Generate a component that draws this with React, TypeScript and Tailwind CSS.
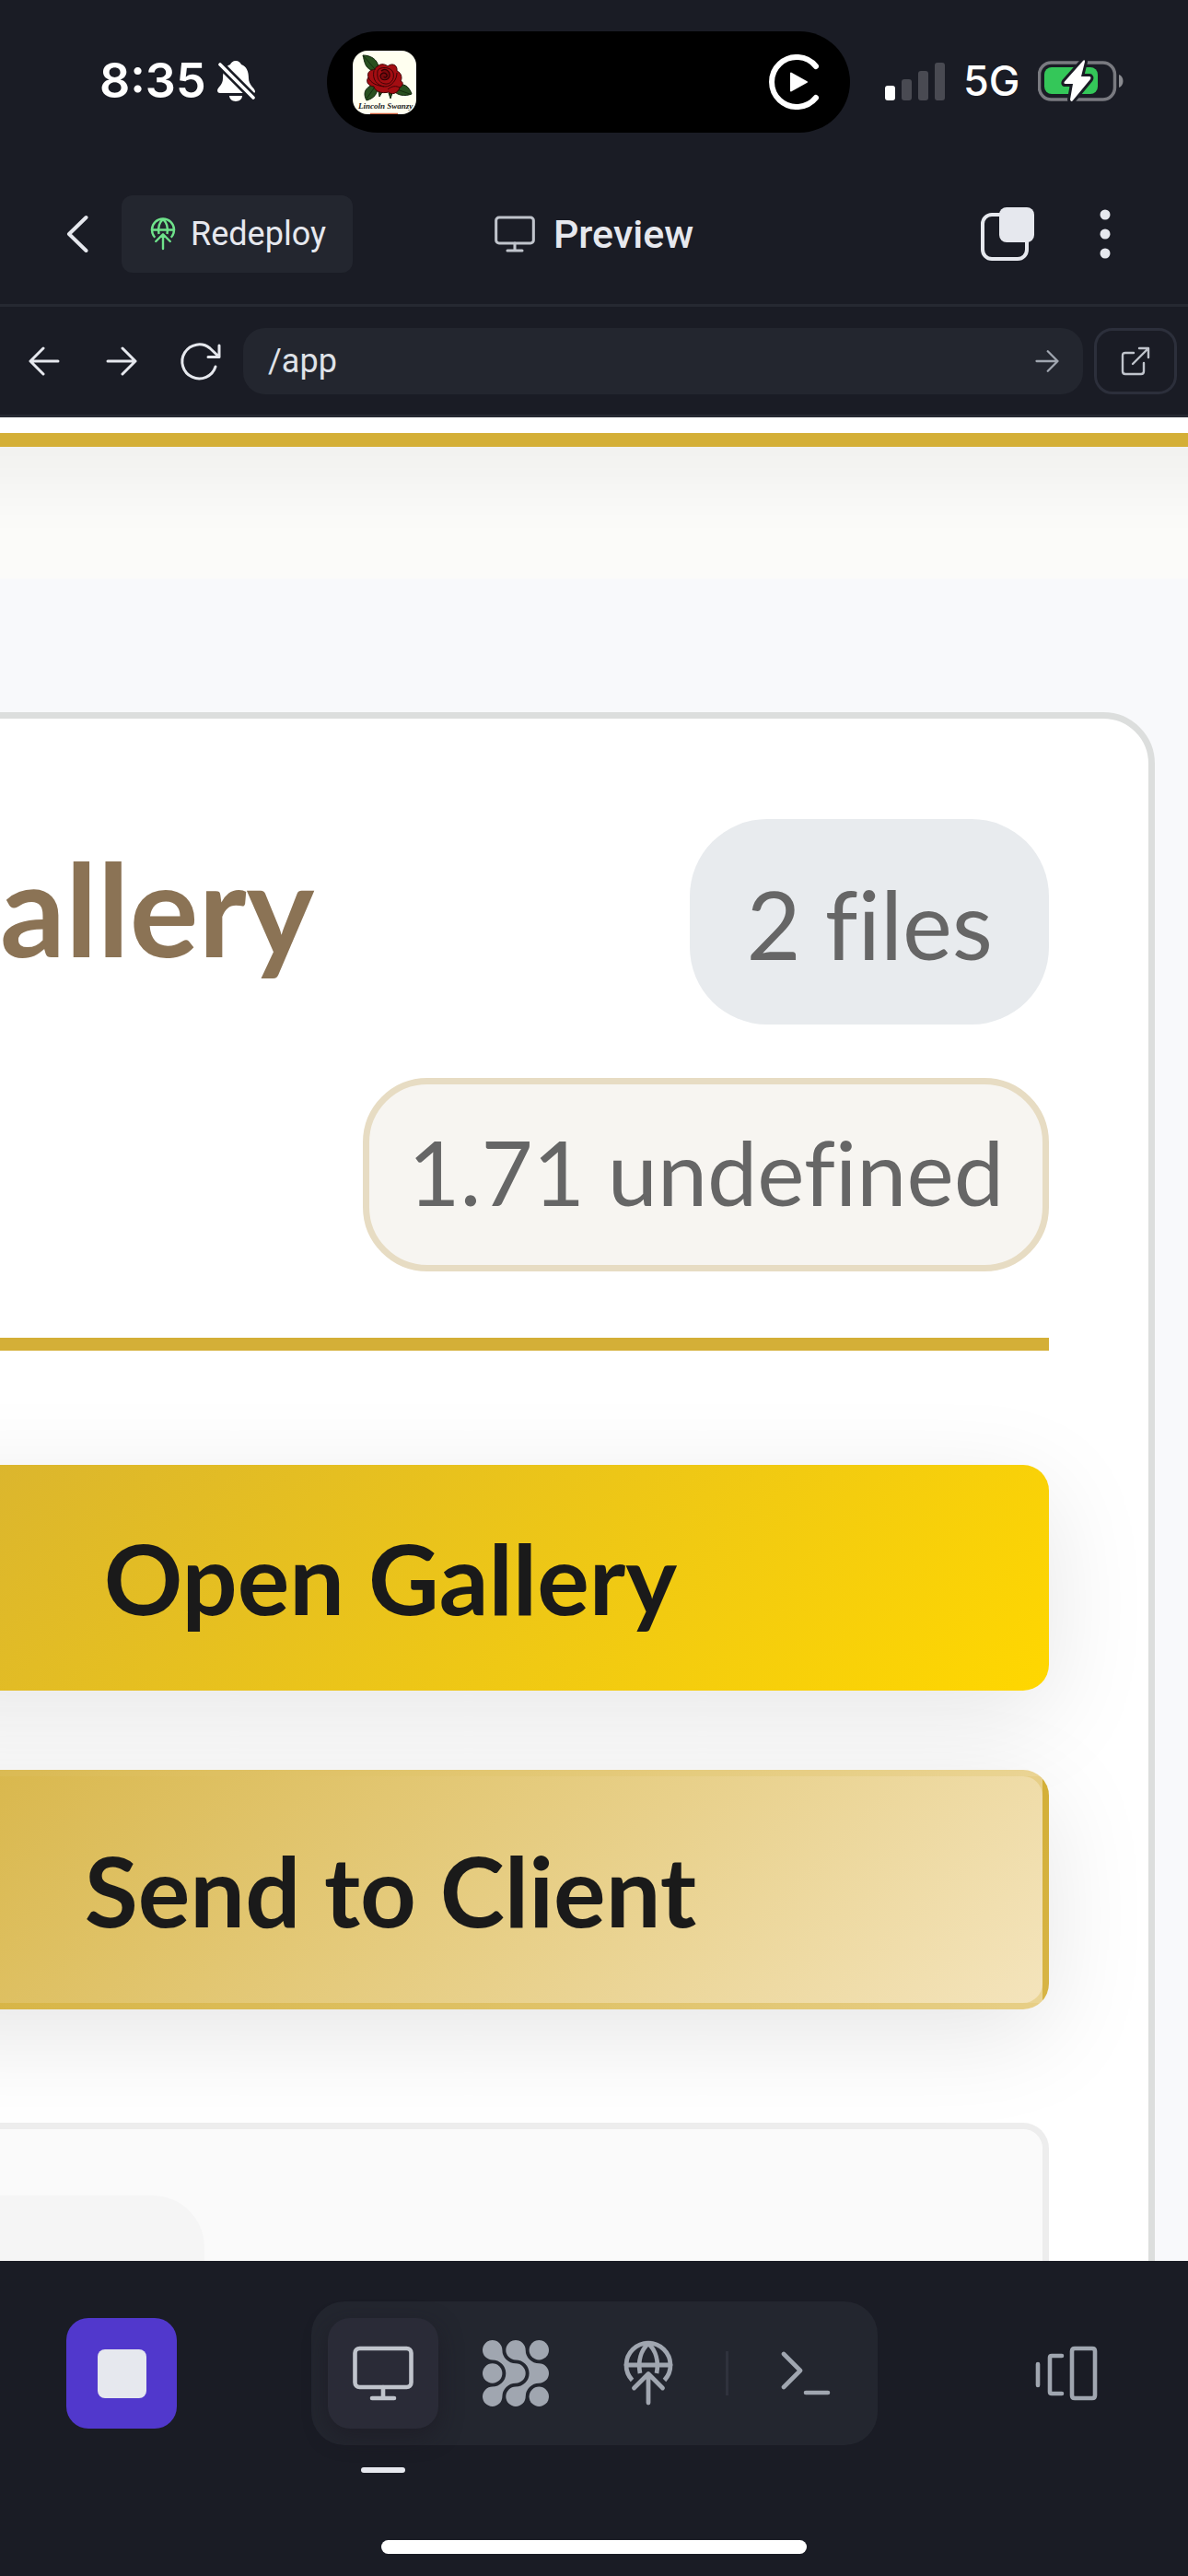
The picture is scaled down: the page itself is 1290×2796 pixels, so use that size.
import React from "react";

type IconProps = { className?: string };

const stroke = {
  fill: "none",
  stroke: "currentColor",
  strokeLinecap: "round" as const,
  strokeLinejoin: "round" as const,
};

function BellOff() {
  return (
    <svg viewBox="0 0 42 44" className="h-11 w-[42px]" aria-hidden="true">
      <path
        fill="#fff"
        d="M20 0C23 0 25 2 26 4C32 6 34 12 34 19C34 26 40 29 41 33C41 35 40 35 38 35H3C1 35 0 34 0 32C1 28 6 26 6 19C6 12 8 6 14 4C15 2 17 0 20 0Z"
      />
      <path fill="#fff" d="M13 38H27C27 41 24 44 20 44S13 41 13 38Z" />
      <path d="M1 2L42 43" stroke="#1a1c25" strokeWidth="9" />
      <path d="M3 4L39 40" stroke="#fff" strokeWidth="3.6" strokeLinecap="round" />
    </svg>
  );
}

function RoseLogo() {
  return (
    <svg viewBox="0 0 69 69" className="size-[69px] rounded-2xl" role="img" aria-label="Rose">
      <rect width="69" height="69" fill="#fffff0" />
      <g fill="#28501f" stroke="#10240d" strokeWidth="1">
        <path d="M11 5C19 5 27 9 28 18C28 22 24 23 20 21C13 18 13 12 11 5Z" />
        <path d="M27 36C19 37 13 41 13 47C13 50 14 52 15 54C22 52 28 48 27 36Z" />
        <path d="M48 39C54 34 61 38 64 47C56 50 49 48 46 45Z" />
        <path d="M28 44L29 50L32 45ZM39 46L41 52L43 46Z" />
      </g>
      <path d="M12 6L24 20M25 38L15 52M48 42L62 47" stroke="#10240d" strokeWidth="0.8" />
      <g fill="#a30d12" stroke="#3d0305" strokeWidth="1">
        <path d="M27 17C31 13 36 15 38 17C42 13 49 15 48 22C53 24 54 30 52 33C56 34 54 39 51 40C49 47 42 48 39 45C31 47 24 44 23 39C16 38 14 33 17 29C15 23 20 20 24 21C24 19 25 18 27 17Z" />
        <path d="M27 22C28 17 42 17 44 24C46 32 40 37 35 36C28 35 26 29 27 22Z" />
        <path d="M23 22C21 31 26 38 35 39C42 39 48 32 48 24" fill="none" />
        <path d="M17 29C20 36 27 38 34 39M38 42C43 38 47 38 51 40" fill="none" />
      </g>
      <path
        d="M31 22C35 18 41 22 40 28C38 33 31 33 30 28C30 24 35 23 37 26C38 29 34 30 34 28"
        fill="#7a090d"
        stroke="#2d0203"
        strokeWidth="1.2"
      />
      <text x="6" y="63" fontSize="9" fontStyle="italic" fontWeight="700" fontFamily="Liberation Serif, serif" fill="#222">
        Lincoln Swanzy
      </text>
      <path d="M19 68.500H49" stroke="#d0603e" strokeWidth="1.500" />
    </svg>
  );
}

function PlayRing() {
  return (
    <svg viewBox="0 0 60 60" className="size-[60px]" aria-hidden="true">
      <path d="M51 13A27 27 0 1 0 51 47" {...stroke} stroke="#fff" strokeWidth="6" />
      <path d="M24 20.500V39.500L41 30Z" fill="#fff" stroke="#fff" strokeWidth="2" strokeLinejoin="round" />
    </svg>
  );
}

function Signal() {
  return (
    <svg viewBox="0 0 65 41" className="h-[41px] w-[65px]" aria-hidden="true">
      <rect x="0" y="25" width="11" height="16" rx="3" fill="#fff" />
      <rect x="18" y="18" width="11" height="23" rx="3" fill="#494a52" />
      <rect x="36" y="9" width="11" height="32" rx="3" fill="#494a52" />
      <rect x="54" y="0" width="11" height="41" rx="3" fill="#494a52" />
    </svg>
  );
}

function Battery() {
  return (
    <svg viewBox="0 0 94 46" className="h-[46px] w-[94px]" aria-hidden="true">
      <rect x="1.500" y="3" width="82" height="40" rx="13" fill="none" stroke="#797a80" strokeWidth="3.500" />
      <path d="M88 16C94 18 94 28 88 30Z" fill="#8a8b90" />
      <rect x="7" y="8" width="58" height="29" rx="8" fill="#34c759" />
      <path
        d="M49 1L29 23.500C28 25 28 26 30 26H38L35 43C36 46 37 45 38 44L57 21C58 19 57 18 56 18H47L51 2C51 0 50 0 49 1Z"
        fill="#fff"
        stroke="#1a1c25"
        strokeWidth="6"
        paintOrder="stroke"
        strokeLinejoin="round"
      />
    </svg>
  );
}

function Chevron() {
  return (
    <svg viewBox="0 0 24 42" className="h-[42px] w-6" aria-hidden="true">
      <path d="M21.500 3L3 21L21.500 39" {...stroke} strokeWidth="4" />
    </svg>
  );
}

function GlobeUp({ className }: IconProps) {
  return (
    <svg viewBox="0 0 72 72" className={className} aria-hidden="true">
      <g {...stroke} strokeWidth="4.8">
        <path d="M18.500 43.500A24 24 0 1 1 53.500 43.500" strokeLinecap="butt" />
        <path d="M36 3.500C28 11 24.500 23 27 36M36 3.500C44 11 47.500 23 45 36" strokeLinecap="butt" />
        <path d="M12 27H60M36 37V68M20.500 52L36 36.500L51.500 52" />
      </g>
    </svg>
  );
}

function Monitor({ className }: IconProps) {
  return (
    <svg viewBox="0 0 66 60" className={className} aria-hidden="true">
      <g {...stroke} strokeWidth="4.6">
        <rect x="2.500" y="3" width="61" height="42" rx="5" />
        <path d="M33 45V57M21 57H45" />
      </g>
    </svg>
  );
}

function Tabs() {
  return (
    <svg viewBox="0 0 60 60" className="size-[60px]" aria-hidden="true">
      <rect x="3" y="9" width="48" height="48" rx="10" {...stroke} strokeWidth="4" />
      <rect x="21" y="1" width="38" height="38" rx="8" fill="currentColor" />
    </svg>
  );
}

function Dots() {
  return (
    <svg viewBox="0 0 12 54" className="h-[54px] w-3" aria-hidden="true" fill="currentColor">
      <circle cx="6" cy="6" r="5.500" />
      <circle cx="6" cy="27" r="5.500" />
      <circle cx="6" cy="48" r="5.500" />
    </svg>
  );
}

function ArrowRight({ className }: IconProps) {
  return (
    <svg viewBox="0 0 34 34" className={className} aria-hidden="true">
      <path d="M2 17H32M18 3L32 17L18 31" {...stroke} strokeWidth="3" />
    </svg>
  );
}

function Reload() {
  return (
    <svg viewBox="0 0 42 42" className="size-[42px]" aria-hidden="true">
      <path d="M39 27A18.500 18.500 0 1 1 33 7L43 16.500M43 4V16.500H31" {...stroke} strokeWidth="3" overflow="visible" />
    </svg>
  );
}

function External() {
  return (
    <svg viewBox="0 0 32 32" className="size-8" aria-hidden="true">
      <path d="M14 7H5Q2 7 2 10V27Q2 30 5 30H22Q25 30 25 27V18M20 2H30V12M30 2L13 19" {...stroke} strokeWidth="2.4" />
    </svg>
  );
}

const dotChain =
  "M21.4 10.7A14.6 14.6 0 0 0 36 25.3A10.7 10.7 0 0 1 36 46.7A14.6 14.6 0 0 0 21.4 61.3A10.7 10.7 0 1 1 10.7 50.6A14.6 14.6 0 0 0 10.7 21.4A10.7 10.7 0 1 1 21.4 10.7Z";

function AgentGrid() {
  return (
    <svg viewBox="0 0 72 72" className="size-[72px]" aria-hidden="true" fill="currentColor">
      <path d={dotChain} />
      <path d={dotChain} transform="translate(25.3 0)" />
      <circle cx="10.7" cy="36" r="10.7" />
      <circle cx="61.3" cy="10.7" r="10.7" />
      <circle cx="61.3" cy="61.3" r="10.7" />
    </svg>
  );
}

function Terminal() {
  return (
    <svg viewBox="0 0 54 50" className="h-[50px] w-[54px]" aria-hidden="true">
      <path d="M3 4L21 22L3 40M27 46H51" {...stroke} strokeWidth="4.6" />
    </svg>
  );
}

function Switcher() {
  return (
    <svg viewBox="0 0 70 60" className="h-[60px] w-[70px]" aria-hidden="true">
      <path
        d="M4 20V43M30 11H19Q17 11 17 13V50Q17 52 19 52H30M44 3H63Q66 3 66 6V54Q66 57 63 57H44Q41 57 41 54V6Q41 3 44 3Z"
        {...stroke}
        strokeWidth="4.6"
      />
    </svg>
  );
}

function StatusBar() {
  return (
    <div className="flex h-[178px] items-start text-white">
      <div className="mt-14 flex w-[355px] shrink-0 items-center gap-3 pl-[108px] font-['Inter',sans-serif]">
        <span className="text-[52px] leading-[64px] font-semibold">8:35</span>
        <BellOff />
      </div>
      <div className="mt-[34px] flex h-[110px] flex-1 items-center justify-between rounded-full bg-black px-7">
        <RoseLogo />
        <PlayRing />
      </div>
      <div className="mt-14 flex h-16 w-[367px] shrink-0 items-center pl-[38px]">
        <Signal />
        <span className="ml-5 font-['Inter',sans-serif] text-[45px] leading-[64px] font-medium">5G</span>
        <span className="ml-5">
          <Battery />
        </span>
      </div>
    </div>
  );
}

function TitleBar() {
  return (
    <div className="grid h-[155px] grid-cols-[1fr_auto_1fr] items-center border-b-[3px] border-[#262932]">
      <div className="flex items-center pl-[72px]">
        <button aria-label="Back" className="w-[60px]">
          <Chevron />
        </button>
        <button className="flex h-[84px] items-center gap-3 rounded-xl bg-[#23262f] pr-[29px] pl-[27px] text-[36px]">
          <GlobeUp className="size-9 text-[#6fe38b]" />
          Redeploy
        </button>
      </div>
      <h1 className="flex items-center gap-5 text-[43px] font-medium">
        <Monitor className="h-10 w-11 text-[#c0c4cc]" />
        Preview
      </h1>
      <div className="flex items-center justify-end gap-[70px] pr-[84px]">
        <button aria-label="Tabs">
          <Tabs />
        </button>
        <button aria-label="More">
          <Dots />
        </button>
      </div>
    </div>
  );
}

function AddressBar() {
  const nav = "flex size-[72px] shrink-0 items-center justify-center";
  return (
    <div className="flex h-[120px] items-center gap-3 border-b-[3px] border-[#262932] px-3">
      <button aria-label="Go back" className={nav}>
        <ArrowRight className="size-[34px] rotate-180" />
      </button>
      <button aria-label="Go forward" className={nav}>
        <ArrowRight className="size-[34px]" />
      </button>
      <button aria-label="Reload" className={`${nav} [&_svg]:overflow-visible`}>
        <Reload />
      </button>
      <form className="flex h-[72px] min-w-0 flex-1 items-center rounded-3xl bg-[#23262f] pr-[26px] pl-[27px]">
        <input
          aria-label="Path"
          defaultValue="/app"
          className="min-w-0 flex-1 bg-transparent text-[36px] text-[#dfe2e8] outline-none"
        />
        <button type="button" aria-label="Open path" className="text-[#a0a6b0]">
          <ArrowRight className="size-[26px]" />
        </button>
      </form>
      <button
        aria-label="Open in new tab"
        className="flex h-[72px] w-[90px] shrink-0 items-center justify-center rounded-[20px] border-[3px] border-[#2c2f3b] text-[#c0c4cc]"
      >
        <External />
      </button>
    </div>
  );
}

function GalleryPage() {
  return (
    <main className="flex min-h-0 flex-1 flex-col overflow-hidden bg-[#f8f9fb] font-['Lato',sans-serif] [font-variant-ligatures:none]">
      <div className="relative -mx-[200px] h-8 shrink-0 border-b-[15px] border-[#d4af37] bg-white shadow-[0_14px_84px_rgba(0,0,0,0.12)]" />
      <div className="h-[143px] shrink-0 bg-[#fbfbf9]" />
      <section className="mt-[145px] mr-9 -ml-[406px] shrink-0 rounded-[56px] border-[7px] border-[#dcdedd] bg-white px-[108px] pt-[109px]">
        <header className="border-b-[14px] border-[#d4af37] pb-[72px]">
          <div className="flex items-center justify-between">
            <h2 className="pb-8 pl-[291px] text-[140px] leading-[160px] font-bold text-[#8b7355]">allery</h2>
            <span className="rounded-[84px] bg-[#e8ebee] px-[61px] pt-[50px] pb-[45px] text-[102px] leading-[128px] text-[#666]">
              2 files
            </span>
          </div>
          <div className="mt-[58px] flex justify-end">
            <span className="rounded-[70px] border-[7px] border-[#e7dcc3] bg-[#f7f5f1] px-[42px] pt-[31px] pb-[37px] text-[97px] leading-[128px] text-[#666]">
              1.71 undefined
            </span>
          </div>
        </header>
        <div className="mt-[124px] flex flex-col gap-[86px] text-[#1a1a1a]">
          <button className="h-[245px] rounded-[28px] bg-[linear-gradient(135deg,#d4af37_0%,#ffd700_100%)] text-[106px] font-bold shadow-[0_28px_112px_rgba(0,0,0,0.1)]">
            Open Gallery
          </button>
          <button className="h-[260px] rounded-[28px] border-[7px] border-[#d4af37]/30 bg-[linear-gradient(135deg,#d4af37_0%,#f4e4bc_100%)] text-[106px] font-bold shadow-[0_28px_112px_rgba(0,0,0,0.1)]">
            Send to Client
          </button>
        </div>
        <div className="mt-[123px] h-80 rounded-[28px] border-[7px] border-black/7 bg-black/2 bg-clip-padding p-[72px]">
          <div className="h-60 w-[434px] rounded-[56px] bg-black/2" />
        </div>
      </section>
    </main>
  );
}

function BottomBar() {
  const tab = "flex size-[120px] items-center justify-center rounded-3xl";
  return (
    <nav className="h-[342px] shrink-0">
      <div className="flex items-center justify-between px-[72px] pt-11">
        <button aria-label="Stop" className={`${tab} bg-[#5138cc]`}>
          <span className="size-[53px] rounded-lg bg-[#e6e8ee]" />
        </button>
        <div className="flex items-center gap-6 rounded-[36px] bg-[#23262f] p-[18px] text-[#a0a6b0]">
          <button aria-label="Preview" className={`${tab} relative bg-[#2a2b37] text-[#c0c4cc] shadow-[0_8px_24px_rgba(26,22,32,0.5)]`}>
            <Monitor className="h-15 w-[66px]" />
            <span className="absolute top-[162px] left-9 h-1.5 w-12 rounded-full bg-[#e6e8ee]" />
          </button>
          <button aria-label="Agent" className={tab}>
            <AgentGrid />
          </button>
          <button aria-label="Deploy" className={tab}>
            <GlobeUp className="size-[72px]" />
          </button>
          <span className="h-12 w-[3px] bg-[#2f323d]" />
          <button aria-label="Console" className={tab}>
            <Terminal />
          </button>
        </div>
        <button aria-label="Switch panes" className={`${tab} text-[#a0a6b0]`}>
          <Switcher />
        </button>
      </div>
      <div className="mx-auto mt-[103px] h-[15px] w-[462px] rounded-full bg-white" />
    </nav>
  );
}

export default function App() {
  return (
    <div className="flex h-screen flex-col overflow-hidden bg-[#1a1c25] font-['Roboto',sans-serif] text-[#e6e8ee]">
      <header className="shrink-0">
        <StatusBar />
        <TitleBar />
        <AddressBar />
      </header>
      <GalleryPage />
      <BottomBar />
    </div>
  );
}
